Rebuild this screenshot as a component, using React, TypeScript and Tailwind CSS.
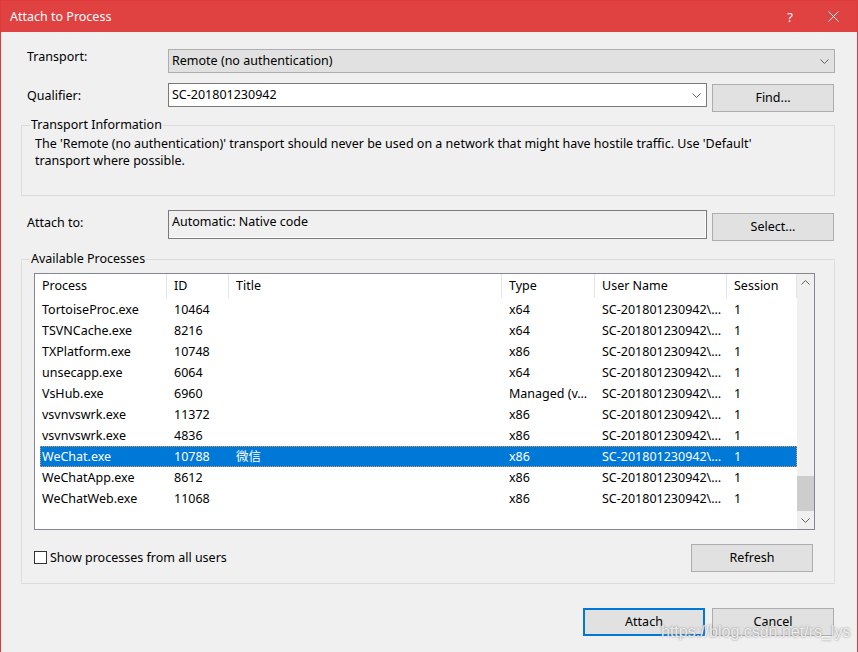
import React from 'react';

type Proc = { name: string; id: string; title: string; type: string; user: string; session: string };

const USER = 'SC-201801230942\\…';

const processes: Proc[] = [
  { name: 'TortoiseProc.exe', id: '10464', title: '', type: 'x64', user: USER, session: '1' },
  { name: 'TSVNCache.exe', id: '8216', title: '', type: 'x64', user: USER, session: '1' },
  { name: 'TXPlatform.exe', id: '10748', title: '', type: 'x86', user: USER, session: '1' },
  { name: 'unsecapp.exe', id: '6064', title: '', type: 'x64', user: USER, session: '1' },
  { name: 'VsHub.exe', id: '6960', title: '', type: 'Managed (v…', user: USER, session: '1' },
  { name: 'vsvnvswrk.exe', id: '11372', title: '', type: 'x86', user: USER, session: '1' },
  { name: 'vsvnvswrk.exe', id: '4836', title: '', type: 'x86', user: USER, session: '1' },
  { name: 'WeChat.exe', id: '10788', title: '微信', type: 'x86', user: USER, session: '1' },
  { name: 'WeChatApp.exe', id: '8612', title: '', type: 'x86', user: USER, session: '1' },
  { name: 'WeChatWeb.exe', id: '11068', title: '', type: 'x86', user: USER, session: '1' },
];

const columns = ['Process', 'ID', 'Title', 'Type', 'User Name', 'Session'];

function Chevron({ up = false, className = '' }: { up?: boolean; className?: string }) {
  return (
    <svg width="9" height="5" viewBox="0 0 9 5" className={className}>
      <path d={up ? 'M0.5 4.5 L4.5 0.5 L8.5 4.5' : 'M0.5 0.5 L4.5 4.5 L8.5 0.5'} fill="none" stroke="currentColor" strokeWidth="1" />
    </svg>
  );
}

function Button({ label, primary = false, className = '' }: { label: string; primary?: boolean; className?: string }) {
  return (
    <button
      className={`h-[28px] w-[122px] bg-[#e1e1e1] text-black flex items-center justify-center ${
        primary ? 'border-2 border-[#0078d7]' : 'border border-[#adadad]'
      } ${className}`}
    >
      {label}
    </button>
  );
}

export default function App() {
  return (
    <div className="relative w-[858px] h-[652px] bg-[#f0f0f0] border-x border-t border-[#e0393b] text-[12.5px] leading-[18px] text-black font-['Noto_Sans','Noto_Sans_CJK_SC',sans-serif] overflow-hidden">
      {/* title bar */}
      <div className="h-[31px] bg-[#e04141] flex items-center text-white">
        <span className="ml-[9px]">Attach to Process</span>
        <span className="ml-auto mr-[35px] text-[13px]">?</span>
        <svg width="11" height="11" viewBox="0 0 11 11" className="mr-[18px]">
          <path d="M0.5 0.5 L10.5 10.5 M10.5 0.5 L0.5 10.5" stroke="white" strokeWidth="1" />
        </svg>
      </div>

      <div className="pl-[20px] pr-[22px]">
        {/* transport */}
        <div className="mt-[17px] flex items-center">
          <span className="w-[147px] pl-[6px] -mt-[8px]">Transport:</span>
          <div className="flex-1 h-[24px] bg-[#e1e1e1] border border-[#adadad] flex items-center pl-[3px] pr-[5px]">
            <span>Remote (no authentication)</span>
            <Chevron className="ml-auto text-[#606060]" />
          </div>
        </div>

        {/* qualifier */}
        <div className="mt-[10px] flex items-start">
          <span className="w-[147px] pl-[6px] mt-[4px]">Qualifier:</span>
          <div className="w-[539px] h-[24px] bg-white border border-[#7a7a7a] flex items-center pl-[3px] pr-[5px]">
            <span>SC-201801230942</span>
            <Chevron className="ml-auto text-[#606060]" />
          </div>
          <Button label="Find..." className="ml-[5px] mt-[1px] h-[27px]" />
        </div>

        {/* transport information */}
        <div className="relative mt-[13px] h-[71px] border border-[#dcdcdc] pl-[13px] pt-[9px] leading-[17px]">
          <span className="absolute -top-[9px] left-[8px] px-[1px] bg-[#f0f0f0] leading-[16px]">Transport Information</span>
          <p>
            The 'Remote (no authentication)' transport should never be used on a network that might have hostile traffic. Use 'Default'
            <br />
            transport where possible.
          </p>
        </div>

        {/* attach to */}
        <div className="mt-[14px] flex items-start">
          <span className="w-[147px] pl-[6px] mt-[4px]">Attach to:</span>
          <div className="w-[539px] h-[29px] border border-[#7a7a7a] shadow-[inset_-1px_-1px_0_#ffffff] pl-[3px] pt-[2px]">
            Automatic: Native code
          </div>
          <Button label="Select..." className="ml-[5px] mt-[3px] h-[27px]" />
        </div>

        {/* available processes */}
        <div className="relative mt-[18px] border border-[#dcdcdc] pl-[12px] pt-[13px] pb-[11px]">
          <span className="absolute -top-[9px] left-[8px] px-[1px] bg-[#f0f0f0] leading-[16px]">Available Processes</span>

          <div className="w-[781px] h-[257px] bg-white border border-[#828790] flex">
            <div className="flex-1">
              <div className="grid grid-cols-[132px_62px_273px_93px_132px_70px] h-[25px]">
                {columns.map((c) => (
                  <div key={c} className="pl-[7px] h-[24px] leading-[24px] border-r border-[#e5e5e5]">
                    {c}
                  </div>
                ))}
              </div>
              {processes.map((p, i) => {
                const selected = p.name === 'WeChat.exe';
                return (
                  <div
                    key={i}
                    className={`ml-[5px] grid grid-cols-[127px_62px_273px_93px_132px_70px] h-[21px] leading-[21px] ${
                      selected ? 'bg-[#0078d7] text-white outline-1 outline-dotted outline-[#e59a4a] -outline-offset-1' : ''
                    }`}
                  >
                    <div className="pl-[2px]">{p.name}</div>
                    <div className="pl-[7px]">{p.id}</div>
                    <div className="pl-[7px]">{p.title}</div>
                    <div className="pl-[7px]">{p.type}</div>
                    <div className="pl-[7px]">{p.user}</div>
                    <div className="pl-[7px]">{p.session}</div>
                  </div>
                );
              })}
            </div>
            {/* scrollbar */}
            <div className="w-[17px] bg-[#f0f0f0] flex flex-col items-center">
              <div className="h-[17px] flex items-center justify-center text-[#606060]">
                <Chevron up />
              </div>
              <div className="flex-1 w-full relative">
                <div className="absolute left-0 right-0 bottom-[1px] h-[35px] bg-[#cdcdcd]" />
              </div>
              <div className="h-[17px] flex items-center justify-center text-[#606060]">
                <Chevron />
              </div>
            </div>
          </div>

          <div className="mt-[14px] mr-[21px] flex items-start">
            <div className="mt-[7px] w-[13px] h-[13px] border border-[#333333] bg-white" />
            <span className="ml-[3px] mt-[5px]">Show processes from all users</span>
            <Button label="Refresh" className="ml-auto" />
          </div>
        </div>

        {/* bottom buttons */}
        <div className="mt-[24px] mr-[1px] flex justify-end gap-[7px]">
          <Button label="Attach" primary />
          <Button label="Cancel" />
        </div>
      </div>

      <span className="absolute left-[660px] top-[622px] text-[16px] font-['Liberation_Sans',sans-serif] text-white/80 [text-shadow:0_0_2px_#777]">
        https://blog.csdn.net/rs_lys
      </span>
    </div>
  );
}
